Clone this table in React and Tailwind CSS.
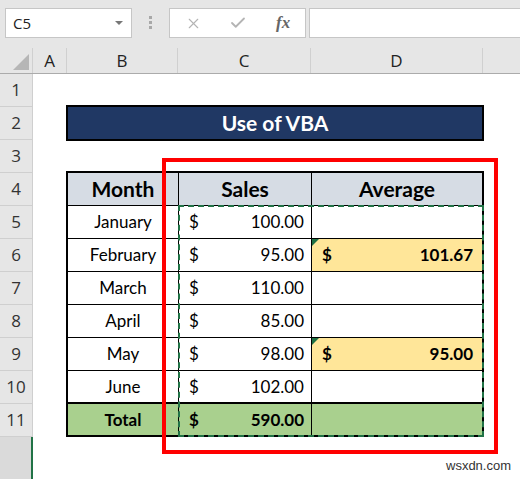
import { FiX, FiCheck } from "react-icons/fi";

const rows = [
  { month: "January", sales: "100.00", avg: null },
  { month: "February", sales: "95.00", avg: "101.67" },
  { month: "March", sales: "110.00", avg: null },
  { month: "April", sales: "85.00", avg: null },
  { month: "May", sales: "98.00", avg: "95.00" },
  { month: "June", sales: "102.00", avg: null },
];

const cellFont = { fontFamily: "Lato, 'Open Sans', sans-serif" };

function Toolbar() {
  return (
    <div className="flex h-[48px] items-start bg-[#e6e6e6] pt-[8px]">
      {/* Name box */}
      <div className="ml-[5px] flex h-[30px] w-[127px] items-center justify-between border border-[#c6c6c6] bg-white pl-[7px] pr-[8px]">
        <span className="text-[15px] text-[#222]">C5</span>
        <span className="h-0 w-0 border-x-[4px] border-t-[4px] border-x-transparent border-t-[#777]" />
      </div>

      {/* Separator dots */}
      <div className="ml-[17px] mt-[8px] flex flex-col gap-[2px]">
        <span className="h-[3px] w-[3px] bg-[#a8a8a8]" />
        <span className="h-[3px] w-[3px] bg-[#a8a8a8]" />
        <span className="h-[3px] w-[3px] bg-[#a8a8a8]" />
      </div>

      {/* Formula buttons */}
      <div className="ml-[17px] flex h-[30px] w-[137px] items-center border border-[#c6c6c6] bg-white">
        <FiX size={17} className="ml-[15px] text-[#b4b4b4]" strokeWidth={1.6} />
        <FiCheck size={18} className="ml-[27px] text-[#b4b4b4]" strokeWidth={2.4} />
        <span className="ml-[29px] text-[17px] italic text-[#666]" style={{ fontFamily: "'Liberation Serif', serif" }}>
          <b className="font-bold">fx</b>
        </span>
      </div>

      {/* Formula input */}
      <div className="ml-[3px] h-[30px] flex-1 border border-r-0 border-[#c6c6c6] bg-white" />
    </div>
  );
}

function ColumnHeaders() {
  const cols = [
    { name: "A", w: "w-[34px]" },
    { name: "B", w: "w-[111px]" },
    { name: "C", w: "w-[133px]" },
    { name: "D", w: "w-[172px]" },
  ];
  return (
    <div className="flex h-[26px] border-b border-[#ababab] bg-[#e6e6e6]">
      <div className="relative w-[33px] border-r border-[#d0d0d0]">
        <svg width="33" height="26" className="absolute left-0 top-0">
          <polygon points="13,22 29,6 29,22" fill="#b6b6b6" />
        </svg>
      </div>
      {cols.map((c) => (
        <div
          key={c.name}
          className={`${c.w} flex items-center justify-center border-r border-[#d0d0d0] text-[17px] text-[#222]`}
        >
          {c.name}
        </div>
      ))}
      <div className="flex-1" />
    </div>
  );
}

function RowHeaders() {
  const nums = [1, 2, 3, 4, 5, 6, 7, 8, 9, 10, 11];
  return (
    <div className="flex w-[33px] flex-col">
      {nums.map((n) => (
        <div
          key={n}
          className="flex h-[33px] items-center justify-center border-b border-r border-[#cfcfcf] bg-[#e6e6e6] text-[17px] text-[#333]"
        >
          {n}
        </div>
      ))}
      <div className="flex-1 border-r-2 border-[#217346] bg-[#dadada]" />
    </div>
  );
}

function SalesTable() {
  return (
    <div className="grid w-[418px] grid-cols-[111px_133px_1fr] border-2 border-black" style={cellFont}>
      {/* Header */}
      <div className="flex h-[33px] items-center justify-center border-b border-r border-black bg-[#d6dce4] text-[21px] font-bold text-black">
        Month
      </div>
      <div className="flex h-[33px] items-center justify-center border-b border-r border-black bg-[#d6dce4] text-[21px] font-bold text-black">
        Sales
      </div>
      <div className="flex h-[33px] items-center justify-center border-b border-black bg-[#d6dce4] text-[21px] font-bold text-black">
        Average
      </div>

      {/* Data rows */}
      {rows.map((r, i) => {
        const last = i === rows.length - 1;
        const rb = last ? "border-b-2" : "border-b";
        return (
          <div key={r.month} className="contents">
            <div className={`flex h-[33px] items-center justify-center ${rb} border-r border-black text-[17px] text-black`}>
              {r.month}
            </div>
            <div className={`flex h-[33px] items-center justify-between ${rb} border-r border-black pl-[10px] pr-[7px] text-[17px] text-black`}>
              <span>$</span>
              <span>{r.sales}</span>
            </div>
            {r.avg ? (
              <div className={`relative flex h-[33px] items-center justify-between ${rb} border-black bg-[#ffe699] pl-[10px] pr-[9px] text-[17px] font-bold text-black`}>
                <span className="absolute left-0 top-0 h-0 w-0 border-r-[7px] border-t-[7px] border-r-transparent border-t-[#1e7145]" />
                <span>$</span>
                <span>{r.avg}</span>
              </div>
            ) : (
              <div className={`h-[33px] ${rb} border-black`} />
            )}
          </div>
        );
      })}

      {/* Total */}
      <div className="flex h-[31px] items-center justify-center border-r border-black bg-[#a9d08e] text-[17px] font-bold text-black">
        Total
      </div>
      <div className="flex h-[31px] items-center justify-between border-r border-black bg-[#a9d08e] pl-[10px] pr-[7px] text-[17px] font-bold text-black">
        <span>$</span>
        <span>590.00</span>
      </div>
      <div className="h-[31px] bg-[#a9d08e]" />
    </div>
  );
}

export default function App() {
  return (
    <div
      className="relative h-[479px] w-[520px] overflow-hidden bg-white"
      style={{ fontFamily: "'Open Sans', 'Liberation Sans', sans-serif" }}
    >
      <Toolbar />
      <ColumnHeaders />

      <div className="flex h-[405px]">
        <RowHeaders />

        {/* Sheet cells */}
        <div className="flex flex-1 flex-col pl-[33px]">
          <div className="h-[31px]" />
          <div
            className="flex h-[36px] w-[418px] items-center justify-center border-2 border-black bg-[#203864] text-[21px] font-bold text-white"
            style={cellFont}
          >
            Use of VBA
          </div>
          <div className="h-[30px]" />
          <SalesTable />
        </div>
      </div>

      {/* Copy selection (marching ants) */}
      <div className="pointer-events-none absolute left-[178px] top-[205px] h-[232px] w-[306px] border-2 border-dashed border-[#217346]" />

      {/* Red highlight */}
      <div className="pointer-events-none absolute left-[162px] top-[158px] h-[296px] w-[336px] border-4 border-[#ff0000]" />

      {/* Watermark */}
      <div
        className="absolute left-[446px] top-[456px] whitespace-nowrap text-[13px] text-[#333]"
        style={{ fontFamily: "'Liberation Sans', Arial, sans-serif" }}
      >
        wsxdn.com
      </div>
    </div>
  );
}
